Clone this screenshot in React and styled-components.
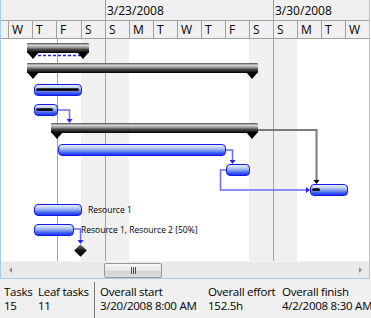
import React from 'react';
import styled, { createGlobalStyle } from 'styled-components';

const GlobalStyle = createGlobalStyle`
  body {
    margin: 0;
    background: #fff;
    font-family: 'Segoe UI', 'Open Sans', 'Noto Sans', sans-serif;
    color: #000;
  }
`;

// day cells, widths include the 1px left border
const days = [
  { d: 'W', w: 24 },
  { d: 'T', w: 24 },
  { d: 'F', w: 25 },
  { d: 'S', w: 24, weekend: true },
  { d: 'S', w: 24, weekend: true, week: true },
  { d: 'M', w: 24 },
  { d: 'T', w: 24 },
  { d: 'W', w: 24 },
  { d: 'T', w: 24 },
  { d: 'F', w: 24 },
  { d: 'S', w: 24, weekend: true },
  { d: 'S', w: 24, weekend: true, week: true },
  { d: 'M', w: 24 },
  { d: 'T', w: 24 },
  { d: 'W', w: 24 },
];

const weeks = [
  { label: '', w: 104 },
  { label: '3/23/2008', w: 168, line: true },
  { label: '3/30/2008', w: 96, line: true },
];

const tasks = [
  { type: 'summary', x: 26, y: 4, w: 62 },
  { type: 'summary', x: 26, y: 24, w: 231 },
  { type: 'task', x: 33, y: 45, w: 48, progress: 94 },
  { type: 'task', x: 33, y: 65, w: 24, progress: 75 },
  { type: 'summary', x: 50, y: 84, w: 207 },
  { type: 'task', x: 57, y: 105, w: 168 },
  { type: 'task', x: 225, y: 125, w: 24 },
  { type: 'task', x: 309, y: 145, w: 38, progress: 22 },
  { type: 'task', x: 33, y: 165, w: 48, label: 'Resource 1', lx: 87 },
  { type: 'task', x: 33, y: 185, w: 40, label: 'Resource 1, Resource 2 [50%]', lx: 80 },
];

const stats = [
  { label: 'Tasks', value: '15', w: 34 },
  { label: 'Leaf tasks', value: '11', w: 56 },
  { sep: true },
  { label: 'Overall start', value: '3/20/2008 8:00 AM', w: 108 },
  { label: 'Overall effort', value: '152.5h', w: 74 },
  { label: 'Overall finish', value: '4/2/2008 8:30 AM' },
];

const Frame = styled.div`
  width: 371px;
  height: 318px;
  display: flex;
  flex-direction: column;
  overflow: hidden;
`;

const Chart = styled.div`
  width: 370px;
  height: 279px;
  box-sizing: border-box;
  border: 1px solid #a6cce9;
  border-top: none;
  background: #fff;
  display: flex;
  flex-direction: column;
`;

const Header = styled.div`
  background: #f0f0f0;
  border-bottom: 1px solid #a0a0a0;
`;

const WeekRow = styled.div`
  display: flex;
  height: 20px;
  border-bottom: 1px solid #a0a0a0;
`;

const WeekCell = styled.div`
  width: ${(p) => p.$w}px;
  box-sizing: border-box;
  border-left: 1px solid ${(p) => (p.$line ? '#a0a0a0' : 'transparent')};
  padding: 1px 0 0 1px;
  font-size: 12px;
  line-height: 19px;
  white-space: nowrap;
`;

const DayRow = styled.div`
  display: flex;
  height: 17px;
`;

const DayCell = styled.div`
  width: ${(p) => p.$w}px;
  box-sizing: border-box;
  border-left: 1px solid ${(p) => (p.$line ? '#a0a0a0' : 'transparent')};
  padding: 1px 0 0 3px;
  font-size: 12px;
  line-height: 16px;
`;

const Body = styled.div`
  position: relative;
  height: 222px;
  display: flex;
  overflow: hidden;
`;

const BodyCol = styled.div`
  width: ${(p) => p.$w}px;
  flex: none;
  box-sizing: border-box;
  border-left: 1px solid ${(p) => (p.$line ? '#a4a4a4' : 'transparent')};
  background: ${(p) => (p.$weekend ? '#f0f0f0' : '#fff')};
`;

const StartLine = styled.div`
  position: absolute;
  left: 56px;
  top: 0;
  bottom: 0;
  width: 1px;
  background: #a4a4a4;
`;

const Links = styled.svg`
  position: absolute;
  left: 0;
  top: 0;
  width: 368px;
  height: 222px;
  overflow: visible;
`;

const SummaryBar = styled.div`
  position: absolute;
  left: ${(p) => p.$x}px;
  top: ${(p) => p.$y}px;
  width: ${(p) => p.$w}px;
  height: 10px;
  box-sizing: border-box;
  border-radius: 1px;
  background: linear-gradient(
    180deg,
    #4a4a4a 0%,
    #d8d8d8 22%,
    #a0a0a0 42%,
    #474747 65%,
    #000 100%
  );
  &::before,
  &::after {
    content: '';
    position: absolute;
    top: 9px;
    border-left: 6px solid transparent;
    border-right: 6px solid transparent;
    border-top: 7px solid #000;
  }
  &::before {
    left: 0;
  }
  &::after {
    right: 0;
  }
`;

const TaskBar = styled.div`
  position: absolute;
  left: ${(p) => p.$x}px;
  top: ${(p) => p.$y}px;
  width: ${(p) => p.$w}px;
  height: 12px;
  box-sizing: border-box;
  border: 1px solid #1818e6;
  border-radius: 4px;
  background: linear-gradient(
    180deg,
    #e6eefb 0%,
    #bcd0f4 28%,
    #7f9bf0 55%,
    #3a5af2 80%,
    #1a36f0 100%
  );
`;

const Progress = styled.div`
  position: absolute;
  left: 1px;
  top: 3px;
  height: 3px;
  border-radius: 2px;
  background: linear-gradient(180deg, #555 0%, #000 45%, #222 100%);
`;

const BarLabel = styled.span`
  position: absolute;
  left: ${(p) => p.$x}px;
  top: ${(p) => p.$y}px;
  font-size: 8.5px;
  line-height: 12px;
  white-space: nowrap;
`;

const Milestone = styled.div`
  position: absolute;
  left: 75px;
  top: 207px;
  width: 9px;
  height: 9px;
  transform: rotate(45deg);
  background: linear-gradient(135deg, #8a8a8a 0%, #1a1a1a 45%, #000 100%);
`;

const ScrollBar = styled.div`
  height: 17px;
  box-sizing: border-box;
  background: #e9e9e9;
  border-top: 1px solid #f3f3f3;
  display: flex;
  align-items: center;
  padding: 0 7px 0 8px;
`;

const Arrow = styled.span`
  width: 0;
  height: 0;
  border-top: 3px solid transparent;
  border-bottom: 3px solid transparent;
  ${(p) =>
    p.$dir === 'left'
      ? 'border-right: 3px solid #8c8c8c;'
      : 'border-left: 3px solid #8c8c8c;'}
`;

const Thumb = styled.div`
  margin-left: 92px;
  width: 58px;
  height: 15px;
  box-sizing: border-box;
  border: 1px solid #979797;
  border-radius: 2px;
  background: linear-gradient(180deg, #f6f6f6 0%, #e6e6e6 50%, #d4d4d4 52%, #dedede 100%);
  display: flex;
  align-items: center;
  justify-content: center;
`;

const Grip = styled.div`
  width: 5px;
  height: 7px;
  background: repeating-linear-gradient(90deg, #4c4c4c 0 1px, transparent 1px 2px);
`;

const Spacer = styled.div`
  flex: 1;
`;

const Footer = styled.div`
  flex: 1;
  background: #f0f0f0;
  display: flex;
  padding-left: 4px;
  font-size: 11.5px;
  letter-spacing: -0.25px;
  line-height: 14px;
`;

const Stat = styled.div`
  width: ${(p) => (p.$w ? `${p.$w}px` : 'auto')};
  flex: ${(p) => (p.$w ? 'none' : '1')};
  padding-top: 6px;
  white-space: nowrap;
  overflow: hidden;
`;

const Separator = styled.div`
  width: 1px;
  margin: 3px 5px 0 0;
  background: #7a7a7a;
`;

function Connectors() {
  const blue = '#6a6aff';
  const head = '#2424ff';
  return (
    <Links viewBox="0 0 368 222">
      <line x1="37" y1="16.5" x2="80" y2="16.5" stroke="#1c1cff" strokeWidth="1.3" strokeDasharray="3 2" />
      <polyline points="56,71 68.5,71 68.5,81" fill="none" stroke={blue} strokeWidth="1.5" />
      <polygon points="65.5,80 71.5,80 68.5,84" fill={head} />
      <polyline points="224,111 231.5,111 231.5,122" fill="none" stroke={blue} strokeWidth="1.5" />
      <polygon points="228.5,121 234.5,121 231.5,125" fill={head} />
      <polyline points="225,131 219.5,131 219.5,151 306,151" fill="none" stroke={blue} strokeWidth="1.5" />
      <polygon points="305,148 305,154 309,151" fill={head} />
      <polyline points="257,91 315.5,91 315.5,142" fill="none" stroke="#7a7a7a" strokeWidth="2" />
      <polygon points="312.5,141 318.5,141 315.5,145" fill="#000" />
      <polyline points="72,190 79.5,190 79.5,202" fill="none" stroke={blue} strokeWidth="1.5" />
      <polygon points="76.5,201 82.5,201 79.5,205" fill={head} />
    </Links>
  );
}

export default function App() {
  return (
    <Frame>
      <GlobalStyle />
      <Chart>
        <Header>
          <WeekRow>
            {weeks.map((wk, i) => (
              <WeekCell key={i} $w={wk.w} $line={wk.line}>
                {wk.label}
              </WeekCell>
            ))}
          </WeekRow>
          <DayRow>
            <DayCell $w={7} />
            {days.map((day, i) => (
              <DayCell key={i} $w={day.w} $line>
                {day.d}
              </DayCell>
            ))}
          </DayRow>
        </Header>
        <Body>
          <BodyCol $w={7} />
          {days.map((day, i) => (
            <BodyCol key={i} $w={day.w} $weekend={day.weekend} $line={day.week} />
          ))}
          <StartLine />
          <Connectors />
          {tasks.map((t, i) =>
            t.type === 'summary' ? (
              <SummaryBar key={i} $x={t.x} $y={t.y} $w={t.w} />
            ) : (
              <React.Fragment key={i}>
                <TaskBar $x={t.x} $y={t.y} $w={t.w}>
                  {t.progress && <Progress style={{ width: `${t.progress}%` }} />}
                </TaskBar>
                {t.label && (
                  <BarLabel $x={t.lx} $y={t.y}>
                    {t.label}
                  </BarLabel>
                )}
              </React.Fragment>
            )
          )}
          <Milestone />
        </Body>
        <ScrollBar>
          <Arrow $dir="left" />
          <Thumb>
            <Grip />
          </Thumb>
          <Spacer />
          <Arrow $dir="right" />
        </ScrollBar>
      </Chart>
      <Footer>
        {stats.map((s, i) =>
          s.sep ? (
            <Separator key={i} />
          ) : (
            <Stat key={i} $w={s.w}>
              <div>{s.label}</div>
              <div>{s.value}</div>
            </Stat>
          )
        )}
      </Footer>
    </Frame>
  );
}
